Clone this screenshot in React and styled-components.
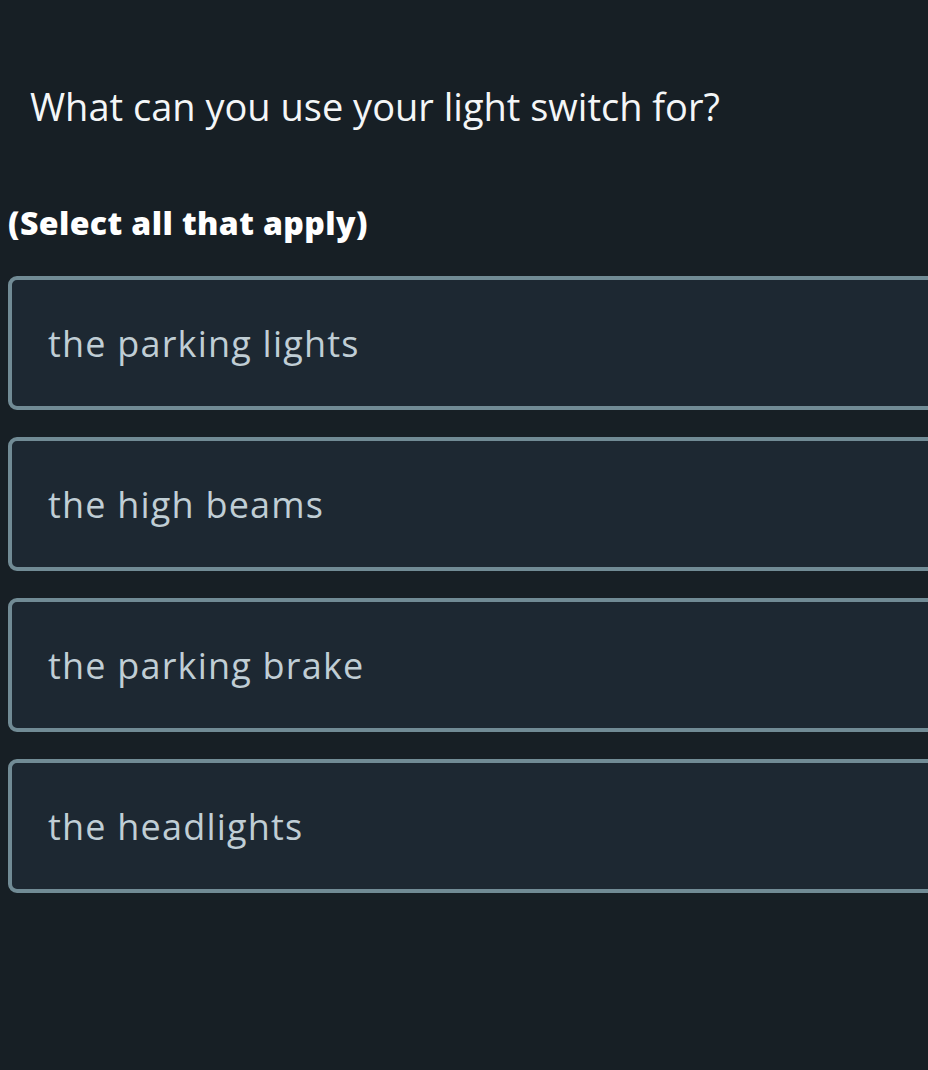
import React from 'react';
import styled, { createGlobalStyle } from "styled-components";

const Global = createGlobalStyle`
    html,body{margin:0;padding:0;background:#171f25;overflow:hidden;}
    body{font-family:"Open Sans",Lato,sans-serif;}
`;

const Page = styled.div`
    width:928px;height:1070px;overflow:hidden;padding:0 0 0 8px;box-sizing:border-box;
    display:flex;flex-direction:column;
`;

const Question = styled.h1`
    margin:82px 0 0 22px;font-size:38px;font-weight:400;color:#f4f6f7;line-height:48px;
`;

const Hint = styled.p`
    margin:73px 0 0 0;font-size:32px;font-weight:800;color:#ffffff;line-height:40px;letter-spacing:0.4px;
`;

const Options = styled.ul`
    list-style:none;margin:33px 0 0 0;padding:0;display:flex;flex-direction:column;gap:27px;
`;

const Option = styled.li`
    box-sizing:border-box;width:960px;height:134px;display:flex;align-items:center;padding:0 0 0 36px;
    background:#1d2832;border:4px solid #718b95;border-radius:9px;
    font-size:36px;color:#c0ced5;letter-spacing:1.2px;
`;

const options = ["the parking lights", "the high beams", "the parking brake", "the headlights"];

const App = () => (
    <>
        <Global />
        <Page>
            <Question>What can you use your light switch for?</Question>
            <Hint>(Select all that apply)</Hint>
            <Options>
                {options.map(o => <Option key={o}>{o}</Option>)}
            </Options>
        </Page>
    </>
);

export default App;
